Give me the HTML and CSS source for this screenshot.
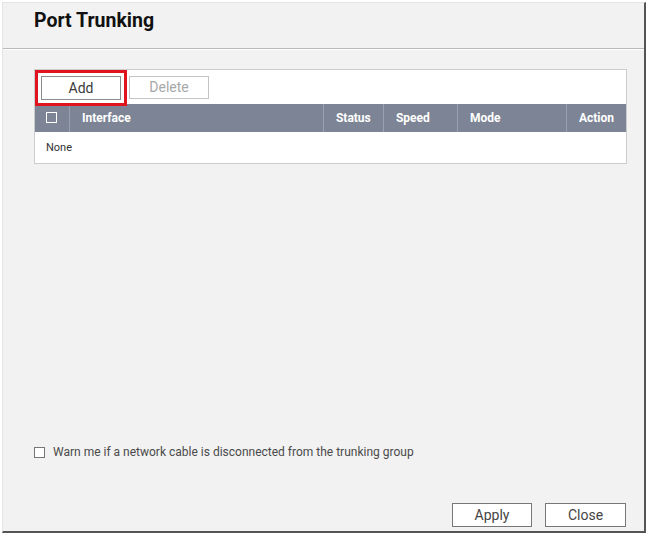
FILE: index.html
```html
<!DOCTYPE html>
<html lang="en">
<head>
    <meta charset="UTF-8">
    <title>Port Trunking</title>
    <link rel="stylesheet" href="styles.css">
</head>
<body>
    <div class="window">
        <div class="header">
            <h1 class="title">Port Trunking</h1>
        </div>
        <div class="content">
            <div class="panel">
                <div class="toolbar">
                    <button class="btn btn-add">Add</button>
                    <button class="btn btn-disabled">Delete</button>
                </div>
                <table class="grid">
                    <thead>
                        <tr>
                            <th class="col-check"><span class="check check-light"></span></th>
                            <th class="col-iface">Interface</th>
                            <th class="col-status">Status</th>
                            <th class="col-speed">Speed</th>
                            <th class="col-mode">Mode</th>
                            <th class="col-action">Action</th>
                        </tr>
                    </thead>
                    <tbody>
                        <tr>
                            <td colspan="6" class="empty">None</td>
                        </tr>
                    </tbody>
                </table>
            </div>
            <label class="warn">
                <span class="check"></span>
                Warn me if a network cable is disconnected from the trunking group
            </label>
        </div>
        <div class="footer">
            <button class="btn btn-foot">Apply</button>
            <button class="btn btn-foot">Close</button>
        </div>
    </div>
</body>
</html>
```

FILE: styles.css
```css
body {
    margin: 0;
    background-color: #ffffff;
    font-family: Roboto, "Liberation Sans", sans-serif;
}
.window {
    margin: 2px 0 0 2px;
    width: 641px;
    height: 528px;
    background-color: #f2f2f2;
    border-top: 1px solid #e4e4e4;
    border-left: 1px solid #e4e4e4;
    border-right: 2px solid #555555;
    border-bottom: 2px solid #555555;
    display: flex;
    flex-direction: column;
}
.header {
    height: 45px;
    border-bottom: 1px solid #b9b9b9;
    box-shadow: 0 1px 0 #ffffff;
    padding-left: 31px;
}
.title {
    margin: 0;
    padding-top: 6px;
    font-size: 19.5px;
    font-weight: 700;
    color: #111111;
}
.content {
    flex: 1;
    padding: 20px 17px 0 31px;
}
.panel {
    background-color: #ffffff;
    border: 1px solid #cccccc;
}
.toolbar {
    height: 34px;
    display: flex;
    align-items: center;
    gap: 8px;
    padding-left: 6px;
}
.btn {
    font-family: Roboto, "Liberation Sans", sans-serif;
    font-size: 14px;
    background-color: #ffffff;
    border: 1px solid #8c8c8c;
    color: #3a3a3a;
    height: 24px;
    width: 80px;
    padding: 0;
}
.btn-add {
    outline: 3px solid #e0141e;
    outline-offset: 3px;
    margin-top: 1px;
}
.btn-disabled {
    color: #a8a8a8;
    border-color: #c4c4c4;
    height: 23px;
}
.grid {
    width: 100%;
    border-collapse: collapse;
    font-size: 12px;
}
.grid th {
    background-color: #7c8495;
    color: #ffffff;
    text-align: left;
    font-weight: 700;
    height: 28px;
    padding: 0 12px;
    border-left: 1px solid #9aa1ae;
}
.grid th:first-child {
    border-left: none;
    padding: 0 11px;
}
.col-check {
    width: 12px;
}
.col-status {
    width: 35px;
}
.col-speed {
    width: 49px;
}
.col-mode {
    width: 84px;
}
.col-action {
    width: 35px;
}
.empty {
    height: 31px;
    padding: 0 11px;
    font-size: 11px;
    color: #333333;
}
.check {
    display: inline-block;
    width: 9px;
    height: 9px;
    border: 1px solid #777777;
    background-color: #ffffff;
    vertical-align: middle;
}
.check-light {
    border: 1.5px solid #ffffff;
    background: none;
    margin-top: -2px;
}
.warn {
    display: flex;
    align-items: center;
    gap: 8px;
    margin-top: 281px;
    font-size: 12px;
    color: #4a4a4a;
}
.footer {
    display: flex;
    justify-content: flex-end;
    gap: 13px;
    padding: 0 18px 4px 0;
}
.btn-foot {
    height: 24px;
    width: 80px;
    border-color: #777777;
    color: #444444;
}
.btn-foot:last-child {
    width: 81px;
}
```
